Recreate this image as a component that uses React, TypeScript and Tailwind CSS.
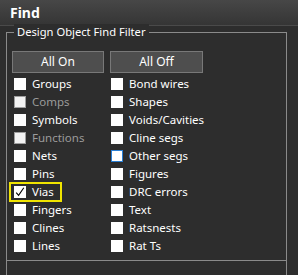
import React from "react";

type Item = { label: string; disabled?: boolean; checked?: boolean; focused?: boolean; hover?: boolean };

const col1: Item[] = [
  { label: "Groups" },
  { label: "Comps", disabled: true },
  { label: "Symbols" },
  { label: "Functions", disabled: true },
  { label: "Nets" },
  { label: "Pins" },
  { label: "Vias", checked: true, focused: true },
  { label: "Fingers" },
  { label: "Clines" },
  { label: "Lines" },
];

const col2: Item[] = [
  { label: "Bond wires" },
  { label: "Shapes" },
  { label: "Voids/Cavities" },
  { label: "Cline segs" },
  { label: "Other segs", hover: true },
  { label: "Figures" },
  { label: "DRC errors" },
  { label: "Text" },
  { label: "Ratsnests" },
  { label: "Rat Ts" },
];

function Box({ item }: { item: Item }) {
  let cls = "bg-white border border-white";
  if (item.disabled) cls = "bg-[#f4f4f4] border border-[#a0a0a0]";
  if (item.hover) cls = "bg-white border border-[#2a7fd4]";
  return (
    <div className={`w-[12px] h-[12px] shrink-0 flex items-center justify-center ${cls}`}>
      {item.checked && (
        <svg width="10" height="10" viewBox="0 0 10 10">
          <path d="M1.2 5.6 L3.6 8.4 L8.8 0.8" fill="none" stroke="#000" strokeWidth="1.1" />
        </svg>
      )}
    </div>
  );
}

function Row({ item }: { item: Item }) {
  return (
    <div className="h-[18px] flex items-center relative">
      {item.focused && (
        <div className="absolute left-[-5px] top-[-1px] w-[53px] h-[20px] border-2 border-[#f0e400]" />
      )}
      <Box item={item} />
      <span className={`ml-[6px] leading-none ${item.disabled ? "text-[#9b9b9b]" : "text-white"}`}>{item.label}</span>
    </div>
  );
}

export default function App() {
  return (
    <div
      className="w-[298px] h-[275px] bg-[#2d2d2d] overflow-hidden flex flex-col text-[11.5px]"
      style={{ fontFamily: '"Noto Sans", "DejaVu Sans", sans-serif' }}
    >
      <div className="h-[26px] shrink-0 bg-gradient-to-b from-[#474747] to-[#353535] border-b border-[#4a4a4a] flex items-center pl-[10px]">
        <span className="text-white font-bold text-[14px] leading-none">Find</span>
      </div>
      <div className="pl-[6px] pt-[6px]">
        <div className="relative w-[281px] border border-[#8a8a8a] pt-[18px] pb-[5px] pl-[7px]">
          <div className="absolute left-[7px] top-[-9px] px-[3px] bg-[#2d2d2d] text-white leading-[16px] text-[11.2px]">
            Design Object Find Filter
          </div>
          <div className="flex gap-[6px] ml-[-2px]">
            <div className="w-[92px] h-[22px] bg-[#4e4e4e] border border-[#787878] text-white flex items-center justify-center text-[12px]">
              All On
            </div>
            <div className="w-[93px] h-[22px] bg-[#4e4e4e] border border-[#787878] text-white flex items-center justify-center text-[12px]">
              All Off
            </div>
          </div>
          <div className="grid grid-cols-[97px_1fr] mt-[2px]">
            <div className="flex flex-col">
              {col1.map((it) => (
                <Row key={it.label} item={it} />
              ))}
            </div>
            <div className="flex flex-col">
              {col2.map((it) => (
                <Row key={it.label} item={it} />
              ))}
            </div>
          </div>
        </div>
        <div className="w-[281px] h-[40px] border-x border-[#8a8a8a]" />
      </div>
    </div>
  );
}
